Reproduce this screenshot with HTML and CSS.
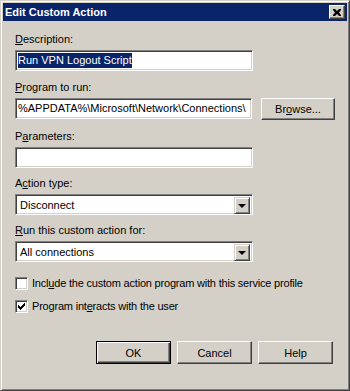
FILE: index.html
```html
<!DOCTYPE html>
<html lang="en">
<head>
    <meta charset="UTF-8">
    <title>Edit Custom Action</title>
    <link rel="stylesheet" href="styles.css">
</head>
<body>
    <div class="window">
        <div class="titlebar">
            <span class="title">Edit Custom Action</span>
            <span class="close-btn">
                <svg width="8" height="7" viewBox="0 0 8 7">
                    <path d="M0 0h2l2 2 2-2h2v1l-2 2.5 2 2.5v1h-2l-2-2-2 2h-2v-1l2-2.5-2-2.5z" fill="#000"/>
                </svg>
            </span>
        </div>

        <div class="content">
            <div class="field">
                <div class="label"><u>D</u>escription:</div>
                <div class="textbox"><span class="selected">Run VPN Logout Script</span></div>
            </div>

            <div class="field">
                <div class="label"><u>P</u>rogram to run:</div>
                <div class="row">
                    <div class="textbox">%APPDATA%\Microsoft\Network\Connections\</div>
                    <div class="button browse">Br<u>o</u>wse...</div>
                </div>
            </div>

            <div class="field tight">
                <div class="label">P<u>a</u>rameters:</div>
                <div class="textbox"></div>
            </div>

            <div class="field tight">
                <div class="label">A<u>c</u>tion type:</div>
                <div class="textbox combo">
                    <span class="combo-text">Disconnect</span>
                    <span class="drop-btn"><span class="arrow"></span></span>
                </div>
            </div>

            <div class="field">
                <div class="label"><u>R</u>un this custom action for:</div>
                <div class="textbox combo">
                    <span class="combo-text">All connections</span>
                    <span class="drop-btn"><span class="arrow"></span></span>
                </div>
            </div>

            <div class="check-list">
                <div class="check">
                    <span class="checkbox"></span>
                    <span class="check-text">Incl<u>u</u>de the custom action program with this service profile</span>
                </div>
                <div class="check">
                    <span class="checkbox">
                        <svg width="7" height="7" viewBox="0 0 7 7">
                            <path d="M0 2h1v1h1v1h1v-1h1v-1h1v-1h1v-1h1v3h-1v1h-1v1h-1v1h-1v1h-1v-1h-1v-1h-1z" fill="#000"/>
                        </svg>
                    </span>
                    <span class="check-text">Program int<u>e</u>racts with the user</span>
                </div>
            </div>

            <div class="actions">
                <div class="button default">OK</div>
                <div class="button">Cancel</div>
                <div class="button">Help</div>
            </div>
        </div>
    </div>
</body>
</html>
```

FILE: styles.css
```css
body {
    margin: 0;
    font-family: "Liberation Sans", Arial, sans-serif;
    font-size: 11px;
    color: #000;
    background: #d4d0c8;
}

/* Window frame */
.window {
    width: 350px;
    height: 391px;
    box-sizing: border-box;
    padding: 2px;
    background: #d4d0c8;
    border-top: 1px solid #d4d0c8;
    border-left: 1px solid #d4d0c8;
    border-right: 1px solid #404040;
    border-bottom: 1px solid #404040;
    box-shadow: inset 1px 1px #fff, inset -1px -1px #808080;
}

.titlebar {
    height: 18px;
    background: #0a246a;
    display: flex;
    align-items: center;
    justify-content: space-between;
    padding: 0 2px;
}

.title {
    color: #fff;
    font-weight: bold;
    font-size: 11px;
}

.close-btn {
    width: 16px;
    height: 14px;
    box-sizing: border-box;
    background: #d4d0c8;
    display: flex;
    align-items: center;
    justify-content: center;
    border-top: 1px solid #fff;
    border-left: 1px solid #fff;
    border-right: 1px solid #404040;
    border-bottom: 1px solid #404040;
    box-shadow: inset -1px -1px #808080;
}

/* Form */
.content {
    padding: 12px 12px 0 12px;
}

.field {
    margin-bottom: 10px;
}

.field.tight {
    margin-bottom: 9px;
}

.label {
    line-height: 13px;
    margin-bottom: 4px;
}

.row {
    display: flex;
    align-items: flex-start;
    gap: 9px;
}

.textbox {
    width: 238px;
    height: 21px;
    box-sizing: border-box;
    background: #fff;
    border-top: 1px solid #808080;
    border-left: 1px solid #808080;
    border-right: 1px solid #fff;
    border-bottom: 1px solid #fff;
    box-shadow: inset 1px 1px #404040, inset -1px -1px #d4d0c8;
    padding: 2px 2px 0 2px;
    line-height: 15px;
    white-space: nowrap;
    overflow: hidden;
}

.selected {
    background: #0a246a;
    color: #fff;
    display: inline-block;
}

.combo {
    display: flex;
    justify-content: space-between;
    padding: 2px;
}

.combo-text {
    padding-left: 2px;
    line-height: 16px;
}

.drop-btn {
    width: 16px;
    height: 17px;
    box-sizing: border-box;
    background: #d4d0c8;
    border-top: 1px solid #d4d0c8;
    border-left: 1px solid #d4d0c8;
    border-right: 1px solid #404040;
    border-bottom: 1px solid #404040;
    box-shadow: inset 1px 1px #fff, inset -1px -1px #808080;
    display: flex;
    align-items: center;
    justify-content: center;
}

.arrow {
    width: 0;
    height: 0;
    border-left: 4px solid transparent;
    border-right: 4px solid transparent;
    border-top: 4px solid #000;
    margin-top: 1px;
}

/* Buttons */
.button {
    width: 75px;
    height: 23px;
    box-sizing: border-box;
    background: #d4d0c8;
    border-top: 1px solid #fff;
    border-left: 1px solid #fff;
    border-right: 1px solid #404040;
    border-bottom: 1px solid #404040;
    box-shadow: inset -1px -1px #808080;
    display: flex;
    align-items: center;
    justify-content: center;
    flex-shrink: 0;
}

.button.browse {
    width: 74px;
    height: 22px;
}

.button.default {
    border: 1px solid #000;
    box-shadow: inset 1px 1px #fff, inset -1px -1px #404040, inset -2px -2px #808080;
}

/* Checkboxes */
.check-list {
    display: flex;
    flex-direction: column;
    gap: 10px;
    margin-top: 15px;
}

.check {
    display: flex;
    align-items: center;
    gap: 4px;
    line-height: 13px;
}

.check-text {
    letter-spacing: -0.2px;
}

.checkbox {
    width: 13px;
    height: 13px;
    box-sizing: border-box;
    background: #fff;
    border-top: 1px solid #808080;
    border-left: 1px solid #808080;
    border-right: 1px solid #fff;
    border-bottom: 1px solid #fff;
    box-shadow: inset 1px 1px #404040, inset -1px -1px #d4d0c8;
    display: flex;
    align-items: center;
    justify-content: center;
}

.actions {
    display: flex;
    justify-content: flex-end;
    gap: 6px;
    margin-top: 28px;
    padding-right: 2px;
}
```
